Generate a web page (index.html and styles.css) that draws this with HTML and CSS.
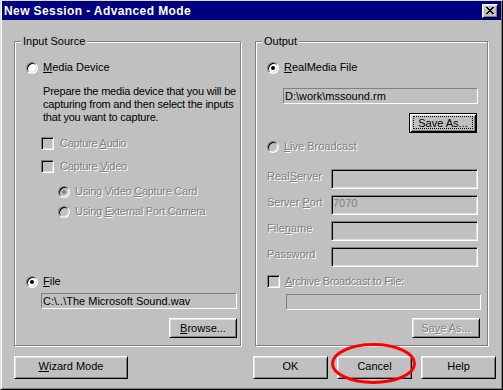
FILE: index.html
```html
<!DOCTYPE html>
<html lang="en">
<head>
<meta charset="UTF-8">
<title>New Session - Advanced Mode</title>
<link rel="stylesheet" href="styles.css">
</head>
<body>
<div class="window">
    <div class="titlebar">
        <span class="titlebar-text">New Session - Advanced Mode</span>
        <span class="close-btn">
            <svg width="8" height="7" viewBox="0 0 8 7" shape-rendering="crispEdges">
                <path fill="#000" d="M0 0h2v1H0z M6 0h2v1H6z M1 1h2v1H1z M5 1h2v1H5z M2 2h4v1H2z M3 3h2v1H3z M2 4h4v1H2z M1 5h2v1H1z M5 5h2v1H5z M0 6h2v1H0z M6 6h2v1H6z"/>
            </svg>
        </span>
    </div>

    <div class="dialog-body">
        <div class="groups">
            <div class="group group-input">
                <span class="group-label">Input Source</span>

                <div class="option indent-1">
                    <span class="radio"></span>
                    <span><u>M</u>edia Device</span>
                </div>
                <p class="hint">Prepare the media device that you will be capturing from and then select the inputs that you want to capture.</p>
                <div class="option option-check mt-audio">
                    <span class="check"></span>
                    <span class="dim narrow">Capture <u>A</u>udio</span>
                </div>
                <div class="option option-check mt-video">
                    <span class="check"></span>
                    <span class="dim narrow">Capture <u>V</u>ideo</span>
                </div>
                <div class="option indent-2 mt-card">
                    <span class="radio disabled checked"></span>
                    <span class="dim narrow">Using Video <u>C</u>apture Card</span>
                </div>
                <div class="option indent-2 mt-camera">
                    <span class="radio disabled"></span>
                    <span class="dim narrow">Using <u>E</u>xternal Port Camera</span>
                </div>
                <div class="option indent-1 mt-file">
                    <span class="radio checked"></span>
                    <span><u>F</u>ile</span>
                </div>
                <div class="textbox input-file">C:\..\The Microsoft Sound.wav</div>
                <button class="btn btn-small browse"><span><u>B</u>rowse...</span></button>
            </div>

            <div class="group group-output">
                <span class="group-label">Output</span>

                <div class="option indent-1">
                    <span class="radio checked"></span>
                    <span><u>R</u>ealMedia File</span>
                </div>
                <div class="textbox output-file">D:\work\mssound.rm</div>
                <button class="btn btn-small btn-default save-as"><span>Save As...</span></button>
                <div class="option indent-1 mt-live">
                    <span class="radio disabled"></span>
                    <span class="dim"><u>L</u>ive Broadcast</span>
                </div>
                <div class="fields">
                    <span class="field-label dim">Real<u>S</u>erver</span>
                    <span class="field"></span>
                    <span class="field-label dim">Server <u>P</u>ort</span>
                    <span class="field">7070</span>
                    <span class="field-label dim">File<u>n</u>ame</span>
                    <span class="field"></span>
                    <span class="field-label dim">Password</span>
                    <span class="field"></span>
                </div>
                <div class="option indent-1 mt-archive">
                    <span class="check"></span>
                    <span class="dim narrow"><u>A</u>rchive Broadcast to File:</span>
                </div>
                <div class="textbox archive-file"></div>
                <button class="btn btn-small save-as-archive"><span class="dim">Sa<u>v</u>e As...</span></button>
            </div>
        </div>

        <div class="buttons">
            <button class="btn btn-wizard"><span><u>W</u>izard Mode</span></button>
            <div class="buttons-right">
                <button class="btn btn-action">OK</button>
                <button class="btn btn-action">Cancel</button>
                <button class="btn btn-action">Help</button>
            </div>
        </div>
    </div>

    <svg class="annotation" width="86" height="42" viewBox="0 0 86 42">
        <ellipse cx="42.5" cy="20.5" rx="41" ry="19" fill="none" stroke="#ff0000" stroke-width="3"/>
    </svg>
</div>
</body>
</html>
```

FILE: styles.css
```css
body {
    margin: 0;
    background-color: #c0c0c0;
    font-family: "Liberation Sans", Arial, sans-serif;
    font-size: 11px;
    line-height: 13px;
    color: #000;
}

.window {
    position: relative;
    box-sizing: border-box;
    width: 503px;
    height: 390px;
    padding: 0 1px 1px;
    background-color: #c0c0c0;
    border: 1px solid;
    border-color: #dfdfdf #000 #000 #dfdfdf;
    box-shadow: inset 1px 0 #fff, inset -1px -1px #808080;
}

/* title bar */
.titlebar {
    display: flex;
    align-items: flex-start;
    height: 19px;
    padding: 0 3px 0 2px;
    background-color: #000080;
    color: #fff;
}

.titlebar-text {
    flex: 1;
    padding-top: 1px;
    font-size: 12px;
    line-height: 18px;
    font-weight: bold;
    letter-spacing: 0.4px;
}

.close-btn {
    display: flex;
    box-sizing: border-box;
    width: 16px;
    height: 14px;
    margin-top: 3px;
    padding: 3px 0 0 4px;
    background-color: #c0c0c0;
    border: 1px solid;
    border-color: #fff #000 #000 #fff;
    box-shadow: inset 1px 1px #dfdfdf, inset -1px -1px #808080;
}

.close-btn svg {
    display: block;
    margin: -1px 0 0 -1px;
}

/* body */
.dialog-body {
    padding: 21px 5px 0 12px;
}

.groups {
    display: flex;
    gap: 14px;
}

.group {
    position: relative;
    box-sizing: border-box;
    height: 305px;
    padding-top: 19px;
    display: flex;
    flex-direction: column;
    align-items: flex-start;
    border: 1px solid #808080;
    box-shadow: inset 1px 1px #fff, 1px 1px #fff;
}

.group-input {
    width: 227px;
}

.group-output {
    width: 233px;
}

.group-label {
    position: absolute;
    top: -7px;
    left: 6px;
    padding: 0 2px;
    background-color: #c0c0c0;
}

.dim {
    color: #808080;
    text-shadow: 1px 1px 0 #fff;
}

.narrow {
    letter-spacing: -0.25px;
}

/* radio / checkbox rows */
.option {
    display: flex;
    align-items: flex-start;
    gap: 5px;
    height: 13px;
    white-space: nowrap;
}

.option-check {
    gap: 6px;
    margin-left: 26px;
}

.indent-1 { margin-left: 11px; }
.indent-2 { margin-left: 43px; }

.mt-audio { margin-top: 13px; }
.mt-video { margin-top: 10px; }
.mt-card { margin-top: 12px; }
.mt-camera { margin-top: 7px; }
.mt-file { margin-top: 57px; }
.mt-live { margin-top: 7px; }
.mt-archive { margin-top: 8px; }

.radio {
    position: relative;
    flex: none;
    box-sizing: border-box;
    width: 12px;
    height: 12px;
    margin-top: 1px;
    border-radius: 50%;
    background-color: #fff;
    border: 1px solid;
    border-color: #808080 #fff #fff #808080;
    box-shadow: inset 1px 1px #000, inset -1px -1px #dfdfdf;
}

.radio.disabled {
    background-color: #c0c0c0;
}

.radio.checked::after {
    content: "";
    position: absolute;
    left: 3px;
    top: 3px;
    width: 4px;
    height: 4px;
    border-radius: 50%;
    background-color: #000;
}

.radio.disabled.checked::after {
    background-color: #808080;
}

.check {
    flex: none;
    box-sizing: border-box;
    width: 13px;
    height: 13px;
    background-color: #c0c0c0;
    border: 1px solid;
    border-color: #808080 #fff #fff #808080;
    box-shadow: inset 1px 1px #000, inset -1px -1px #dfdfdf;
}

.hint {
    width: 196px;
    margin: 11px 0 0 28px;
    letter-spacing: -0.2px;
}

/* text boxes */
.textbox {
    box-sizing: border-box;
    height: 16px;
    padding: 1px 0 0 1px;
    overflow: hidden;
    white-space: nowrap;
    border: 1px solid;
    border-color: #808080 #fff #fff #808080;
}

.input-file {
    width: 196px;
    margin: 5px 0 0 26px;
}

.output-file {
    width: 195px;
    margin: 14px 0 0 27px;
}

.archive-file {
    width: 195px;
    margin: 6px 0 0 30px;
}

.fields {
    display: grid;
    grid-template-columns: 64px 147px;
    grid-auto-rows: 20px;
    row-gap: 6px;
    margin: 16px 0 0 11px;
}

.field-label {
    margin-top: 1px;
    white-space: nowrap;
}

.field {
    box-sizing: border-box;
    height: 20px;
    color: #808080;
    border: 1px solid;
    border-color: #808080 #fff #fff #808080;
    box-shadow: inset 1px 1px #000, inset -1px -1px #dfdfdf;
    padding: 1px 0 0 1px;
}

/* buttons */
.btn {
    position: relative;
    display: flex;
    align-items: center;
    justify-content: center;
    box-sizing: border-box;
    padding: 0;
    font-family: inherit;
    font-size: 11px;
    line-height: 13px;
    color: #000;
    background-color: #c0c0c0;
    border: 1px solid;
    border-color: #fff #000 #000 #fff;
    box-shadow: inset 1px 1px #dfdfdf, inset -1px -1px #808080;
}

.btn-small {
    width: 68px;
    height: 20px;
}

.btn-default {
    border-color: #000;
    box-shadow: inset 1px 1px #fff, inset -1px -1px #000, inset 2px 2px #dfdfdf, inset -2px -2px #808080;
}

.btn-default::after {
    content: "";
    position: absolute;
    top: 2px;
    left: 3px;
    right: 3px;
    bottom: 3px;
    border: 1px dotted #000;
}

.browse { margin: 9px 0 0 154px; }
.save-as { margin: 9px 0 0 153px; }
.save-as-archive { margin: 8px 0 0 156px; }

.buttons {
    display: flex;
    justify-content: space-between;
    margin-top: 10px;
}

.buttons-right {
    display: flex;
    gap: 9px;
}

.btn-wizard,
.btn-action {
    height: 23px;
    padding-bottom: 2px;
}

.btn-wizard {
    width: 114px;
}

.btn-action {
    width: 75px;
}

/* red highlight drawn over the Cancel button */
.annotation {
    position: absolute;
    left: 330px;
    top: 342px;
}
```
